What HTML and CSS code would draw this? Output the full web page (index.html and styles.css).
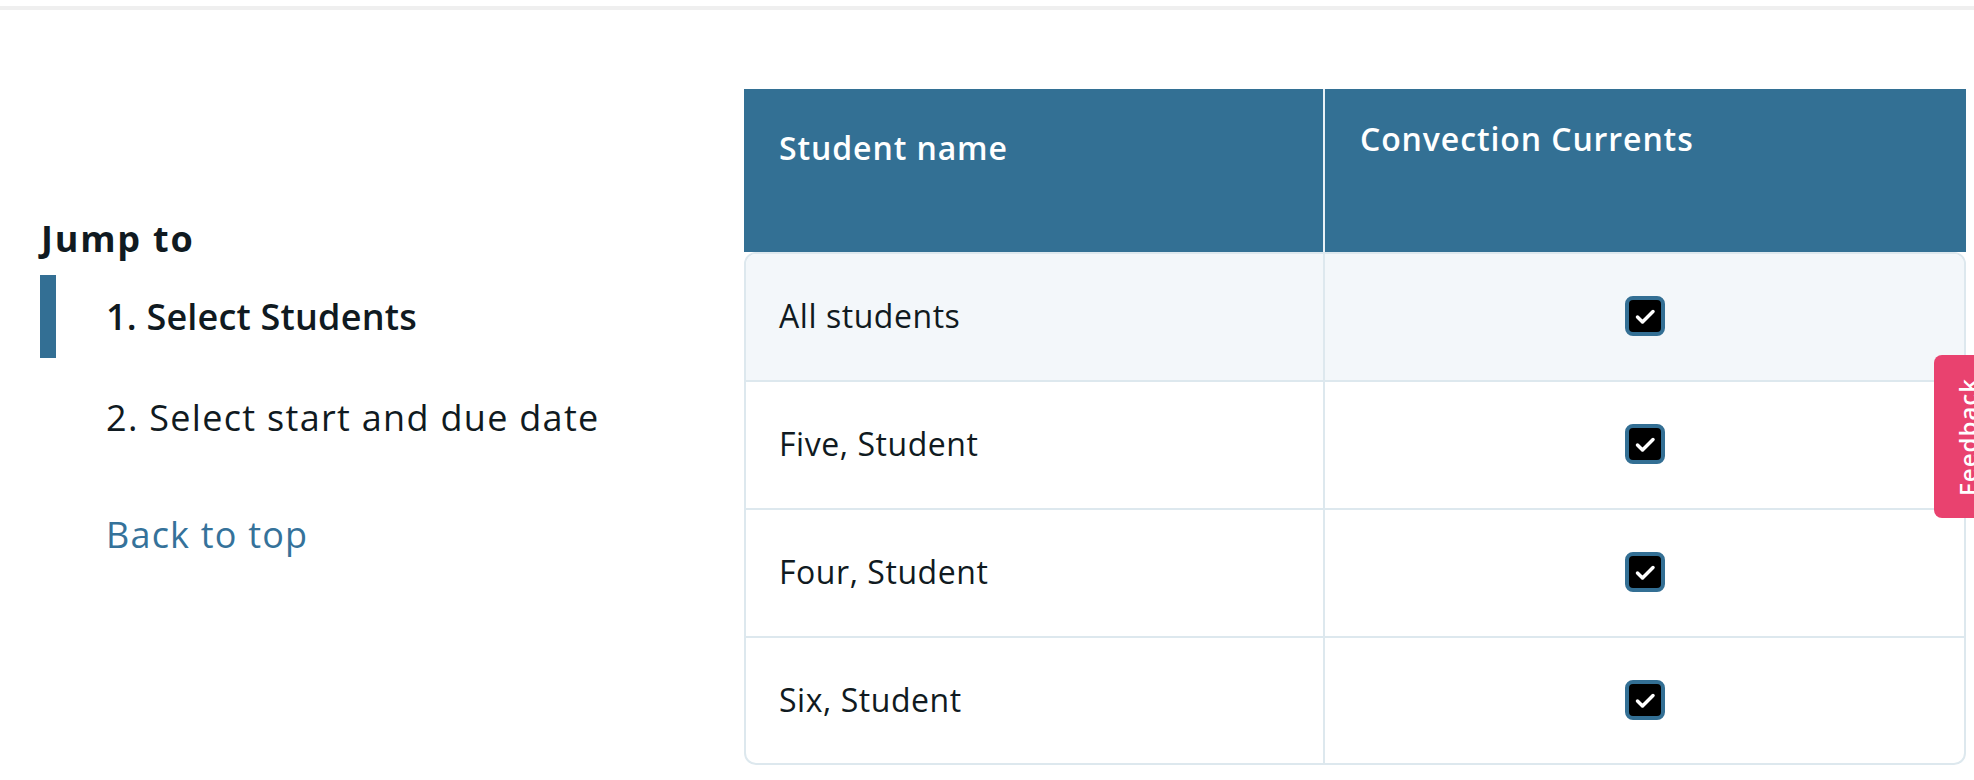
FILE: index.html
```html
<!DOCTYPE html>
<html lang="en">
<head>
<meta charset="utf-8">
<title>Select Students</title>
<link rel="stylesheet" href="styles.css">
</head>
<body>
<div class="topline"></div>
<main class="layout">
  <aside class="jump">
    <h2 class="jump-title">Jump to</h2>
    <ul class="jump-list">
      <li class="jump-item active">1. Select Students</li>
      <li class="jump-item second">2. Select start and due date</li>
    </ul>
    <a class="back" href="#top">Back to top</a>
  </aside>
  <section class="grid-table">
    <div class="thead">
      <div class="th th-name">Student name</div>
      <div class="th th-lesson">Convection Currents</div>
    </div>
    <div class="tbody">
      <div class="tr tr-all">
        <div class="td td-name">All students</div>
        <div class="td td-check"><span class="check"><svg viewBox="0 0 32 32" width="32" height="32"><path d="M8.5 17 L13.5 22 L24 11.5" fill="none" stroke="#fff" stroke-width="3.5" stroke-linecap="round" stroke-linejoin="round"/></svg></span></div>
      </div>
      <div class="tr">
        <div class="td td-name">Five, Student</div>
        <div class="td td-check"><span class="check"><svg viewBox="0 0 32 32" width="32" height="32"><path d="M8.5 17 L13.5 22 L24 11.5" fill="none" stroke="#fff" stroke-width="3.5" stroke-linecap="round" stroke-linejoin="round"/></svg></span></div>
      </div>
      <div class="tr">
        <div class="td td-name">Four, Student</div>
        <div class="td td-check"><span class="check"><svg viewBox="0 0 32 32" width="32" height="32"><path d="M8.5 17 L13.5 22 L24 11.5" fill="none" stroke="#fff" stroke-width="3.5" stroke-linecap="round" stroke-linejoin="round"/></svg></span></div>
      </div>
      <div class="tr tr-last">
        <div class="td td-name">Six, Student</div>
        <div class="td td-check"><span class="check"><svg viewBox="0 0 32 32" width="32" height="32"><path d="M8.5 17 L13.5 22 L24 11.5" fill="none" stroke="#fff" stroke-width="3.5" stroke-linecap="round" stroke-linejoin="round"/></svg></span></div>
      </div>
    </div>
  </section>
</main>
<button class="feedback" type="button"><span class="feedback-label">Feedback</span></button>
</body>
</html>
```
FILE: styles.css
```css
html, body {
  margin: 0;
  padding: 0;
  background: #ffffff;
}

body {
  font-family: "Open Sans", "Noto Sans", sans-serif;
  color: #101a21;
  overflow: hidden;
}

.topline {
  margin-top: 6px;
  height: 4px;
  background: #efefef;
}

.layout {
  display: flex;
  align-items: flex-start;
  padding-top: 79px;
}

/* ---------- Jump to sidebar ---------- */
.jump {
  width: 744px;
  box-sizing: border-box;
  padding-left: 40px;
  flex: none;
}

.jump-title {
  margin: 126px 0 12px 0;
  font-size: 36px;
  line-height: 48px;
  font-weight: 700;
  letter-spacing: 1.8px;
  padding-left: 1px;
}

.jump-list {
  list-style: none;
  margin: 0;
  padding: 0;
}

.jump-item {
  height: 83px;
  box-sizing: border-box;
  display: flex;
  align-items: center;
  border-left: 16px solid transparent;
  padding-left: 50px;
  font-size: 36px;
  line-height: 48px;
  letter-spacing: 1.3px;
}

.jump-item.active {
  border-left-color: #336f94;
  font-weight: 600;
  letter-spacing: 0.2px;
}

.jump-item.second {
  margin-top: 18px;
}

.back {
  display: block;
  margin-top: 52px;
  padding-left: 66px;
  font-size: 36px;
  line-height: 48px;
  color: #35729a;
  text-decoration: none;
  letter-spacing: 1.2px;
}

/* ---------- Table ---------- */
.grid-table {
  width: 1222px;
  flex: none;
}

.thead {
  display: grid;
  grid-template-columns: 581px 641px;
  height: 163px;
  background: #337094;
  color: #ffffff;
}

.th {
  font-size: 32px;
  line-height: 48px;
  font-weight: 600;
  letter-spacing: 0.9px;
  box-sizing: border-box;
}

.th-name {
  padding: 35px 0 0 35px;
  border-right: 2px solid #e9f1f6;
}

.th-lesson {
  padding: 26px 0 0 35px;
}

.tbody {
  border: 2px solid #dde8ee;
  border-radius: 12px;
  overflow: hidden;
}

.tr {
  display: grid;
  grid-template-columns: 579px 1fr;
  height: 128px;
  box-sizing: border-box;
  border-bottom: 2px solid #dde8ee;
}

.tr-all {
  background: #f3f7fa;
}

.tr-last {
  height: 125px;
  border-bottom: 0;
}

.td {
  display: flex;
  align-items: center;
  font-size: 32px;
  line-height: 48px;
  letter-spacing: 0.55px;
  padding-bottom: 2px;
  box-sizing: border-box;
}

.td-name {
  padding-left: 33px;
  border-right: 2px solid #dde8ee;
}

.td-check {
  justify-content: center;
}

.check {
  width: 40px;
  height: 40px;
  box-sizing: border-box;
  border: 4px solid #336f94;
  border-radius: 8px;
  background: #000000;
  display: flex;
  align-items: center;
  justify-content: center;
}

.check svg {
  display: block;
}

/* ---------- Feedback tab ---------- */
.feedback {
  position: fixed;
  left: 1934px;
  top: 355px;
  width: 80px;
  height: 163px;
  margin: 0;
  padding: 0 0 0 22px;
  border: 0;
  border-radius: 8px 0 0 8px;
  background: #e9426f;
  color: #ffffff;
  display: flex;
  align-items: center;
  justify-content: flex-start;
  box-sizing: border-box;
}

.feedback-label {
  writing-mode: vertical-rl;
  transform: rotate(180deg);
  font-family: "Open Sans", "Noto Sans", sans-serif;
  font-size: 24px;
  line-height: 24px;
  font-weight: 600;
  letter-spacing: 1px;
}
```
